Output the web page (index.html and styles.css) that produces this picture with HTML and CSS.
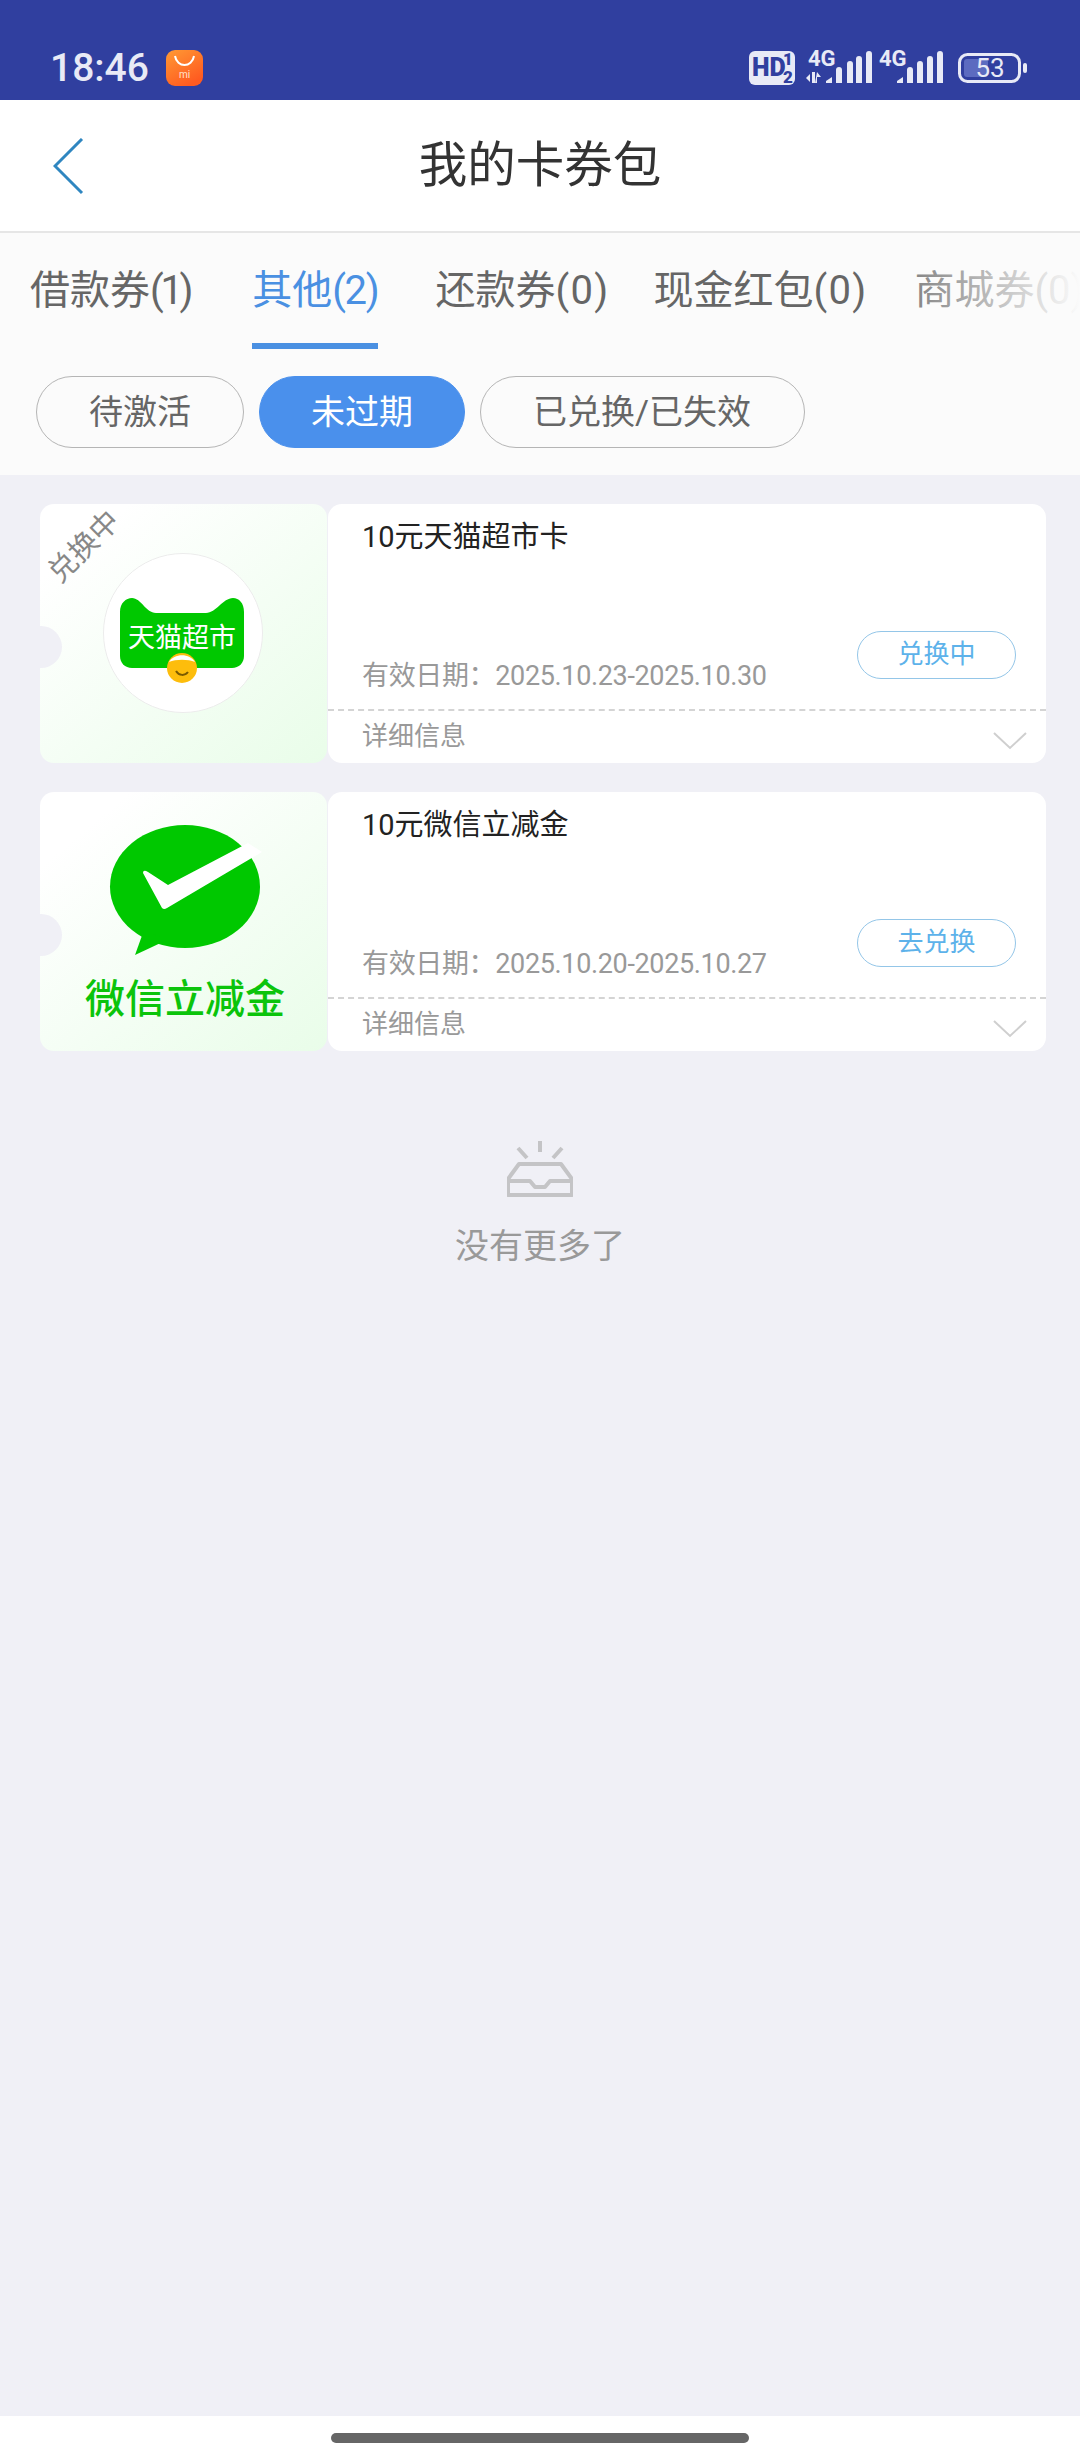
FILE: index.html
```html
<!DOCTYPE html>
<html lang="zh">
<head>
<meta charset="utf-8">
<title>我的卡券包</title>
<link rel="stylesheet" href="styles.css">
</head>
<body>
<div class="page">
  <div class="status">
    <div class="status-left">
      <span class="time">18:46</span>
      <svg class="mi-icon" width="37" height="36" viewBox="0 0 37 36">
        <defs><linearGradient id="mi" x1="0" y1="0" x2="0.6" y2="1"><stop offset="0" stop-color="#ff9a34"/><stop offset="1" stop-color="#ff5a20"/></linearGradient></defs>
        <rect width="37" height="36" rx="9" fill="url(#mi)"/>
        <path d="M9 6c2 12 17 12 19 0" fill="none" stroke="#fff" stroke-width="2"/>
        <text x="18.500" y="28" class="mi-text">mi</text>
      </svg>
    </div>
    <svg class="status-right" width="280" height="46" viewBox="751 40 280 46">
      <rect x="751" y="51" width="46" height="34" rx="6" fill="#e8eaf6"/>
      <text x="754" y="76" class="hd">HD</text>
      <text x="785" y="65" class="hd-small">1</text>
      <text x="785" y="83" class="hd-small">2</text>
      <text x="810" y="66" class="net">4G</text>
      <path d="M808 78l4-4v8zM814 72h3v11h-3zM819 72l4 5h-4v6h-2z" fill="#e8eaf6"/>
      <path d="M828 83v-2l6-4v6zM838 83v-13a1 1 0 0 1 6 0v13zM849 83v-19a1 1 0 0 1 6 0v19zM858 83v-24a1 1 0 0 1 6 0v24zM868 83v-29a1 1 0 0 1 6 0v29z" fill="#e8eaf6"/>
      <text x="881" y="66" class="net">4G</text>
      <path d="M899 83v-2l6-4v6zM909 83v-13a1 1 0 0 1 6 0v13zM919 83v-19a1 1 0 0 1 6 0v19zM929 83v-24a1 1 0 0 1 6 0v24zM939 83v-29a1 1 0 0 1 6 0v29z" fill="#e8eaf6"/>
      <rect x="961.500" y="54.500" width="60" height="27" rx="8" fill="none" stroke="#e8eaf6" stroke-width="3"/>
      <rect x="966" y="59" width="24" height="18" rx="3" fill="#5c6bc0"/>
      <text x="992" y="77" class="batt">53</text>
      <rect x="1025" y="63" width="4" height="10" rx="2" fill="#e8eaf6"/>
    </svg>
  </div>

  <header class="header">
    <svg class="back" width="31" height="57" viewBox="0 0 31 57"><path d="M29 1 2 28l27 27" fill="none" stroke="#2f86c0" stroke-width="3"/></svg>
    <h1 class="title">我的卡券包</h1>
  </header>

  <section class="filters">
    <div class="tabs">
      <span class="tab tab-a">借款券<span class="par-a">(1)</span></span>
      <span class="tab tab-b active">其他<span class="par-b">(2)</span></span>
      <span class="tab tab-c">还款券<span class="par-c">(0)</span></span>
      <span class="tab tab-d">现金红包<span class="par-c">(0)</span></span>
      <span class="tab">商城券(0)</span>
      <div class="tabs-fade"></div>
    </div>
    <div class="pills">
      <span class="pill">待激活</span>
      <span class="pill on">未过期</span>
      <span class="pill pill-wide">已兑换/已失效</span>
    </div>
  </section>

  <main class="list">
    <article class="card">
      <div class="thumb">
        <span class="notch"></span>
        <span class="stamp">兑换中</span>
        <svg class="art" width="287" height="259" viewBox="0 0 287 259">
          <circle cx="143" cy="129" r="79.500" fill="#fff" stroke="#ececec" stroke-width="1"/>
          <path d="M80 108c0-9 6-14 12-14 9 0 14 15 24 15h50c10 0 17-15 27-15 6 0 11 5 11 14v44c0 7-5 12-12 12H92c-7 0-12-5-12-12z" fill="#00c800"/>
          <text x="142" y="143" class="tm-text">天猫超市</text>
          <circle cx="142" cy="164" r="15" fill="#fdbd0c"/>
          <path d="M129 158c5-9 21-9 26 0-7-3-19-3-26 0z" fill="#fff"/>
          <path d="M136 167c3 5 9 5 12 1" fill="none" stroke="#7a5a00" stroke-width="2"/>
        </svg>
      </div>
      <div class="info">
        <div class="info-top">
          <div class="name">10元天猫超市卡</div>
          <div class="info-row">
            <span class="date">有效日期：2025.10.23-2025.10.30</span>
            <span class="btn">兑换中</span>
          </div>
        </div>
        <div class="more">
          <span>详细信息</span>
          <svg class="chev" width="34" height="18" viewBox="0 0 34 18"><path d="M1 1l16 15L33 1" fill="none" stroke="#cfcfcf" stroke-width="2"/></svg>
        </div>
      </div>
    </article>

    <article class="card">
      <div class="thumb">
        <span class="notch"></span>
        <svg class="art" width="287" height="259" viewBox="0 0 287 259">
          <ellipse cx="145" cy="94.500" rx="75" ry="61.500" fill="#00c800"/>
          <path d="M104 138l-9 25 32-15z" fill="#00c800"/>
          <path d="M103 81l19 35q2 2 5 0l95-56-14-9-80 42-20-13q-5-3-5 1z" fill="#fff"/>
        </svg>
        <span class="wx-label">微信立减金</span>
      </div>
      <div class="info">
        <div class="info-top">
          <div class="name">10元微信立减金</div>
          <div class="info-row">
            <span class="date">有效日期：2025.10.20-2025.10.27</span>
            <span class="btn">去兑换</span>
          </div>
        </div>
        <div class="more">
          <span>详细信息</span>
          <svg class="chev" width="34" height="18" viewBox="0 0 34 18"><path d="M1 1l16 15L33 1" fill="none" stroke="#cfcfcf" stroke-width="2"/></svg>
        </div>
      </div>
    </article>

    <div class="empty">
      <svg width="66" height="56" viewBox="0 0 66 56">
        <path d="M33 0v11M11 7l9 10M55 7l-9 10M12 23h42l11 15v16H1V38zM1 40h22l5 6h10l5-6h22" fill="none" stroke="#c4c4c6" stroke-width="4" stroke-linejoin="round"/>
      </svg>
      <p class="empty-text">没有更多了</p>
    </div>
  </main>

  <footer class="nav"><span class="home"></span></footer>
</div>
</body>
</html>
```

FILE: styles.css
```css
* { box-sizing: border-box; }
html, body { margin: 0; padding: 0; }
body { font-family: Roboto, "Noto Sans CJK SC", sans-serif; background: #f0f0f6; }
.page { width: 1080px; height: 2460px; display: flex; flex-direction: column; overflow: hidden; }

.status { height: 100px; background: #303f9f; display: flex; justify-content: space-between; align-items: flex-start; padding: 40px 51px 0 50px; color: #e8eaf6; }
.status-left { display: flex; align-items: center; gap: 17px; margin-top: 10px; }
.time { font-size: 39px; line-height: 36px; font-weight: 500; }
.mi-icon { display: block; }
.mi-text { font-size: 10px; fill: #ffe2d0; text-anchor: middle; }
.status-right { display: block; }
.status svg text { font-family: Roboto, sans-serif; }
.hd { font-size: 25px; font-weight: 900; fill: #303f9f; }
.hd-small { font-size: 17px; font-weight: 900; fill: #303f9f; }
.net { font-size: 22px; font-weight: 700; fill: #e8eaf6; }
.batt { font-size: 26px; fill: #e8eaf6; text-anchor: middle; }

.header { height: 133px; background: #fff; border-bottom: 2px solid #e6e6e6; display: flex; align-items: center; justify-content: center; position: relative; }
.back { position: absolute; left: 53px; top: 38px; }
.title { margin: 0; font-size: 48.500px; font-weight: 400; color: #333; line-height: 60px; }

.filters { background: #fbfbfb; }
.tabs { display: flex; padding-left: 30px; position: relative; overflow: hidden; white-space: nowrap; }
.tab { font-size: 40px; line-height: 40px; color: #666; padding: 38px 0 32px; border-bottom: 6px solid transparent; flex: none; }
.tab-a { margin-right: 62px; }
.tab-b { margin-right: 57px; }
.tab-c { margin-right: 44px; }
.tab-d { margin-right: 47px; }
.par-a { letter-spacing: -3.300px; }
.par-b { letter-spacing: -1.300px; }
.par-c { letter-spacing: 1.300px; }
.tab.active { color: #4a90e2; border-bottom-color: #4a90e2; }
.tabs-fade { position: absolute; top: 0; right: 0; bottom: 0; width: 190px; background: linear-gradient(to right, rgba(251,251,251,0.1), #fbfbfb 100%); }

.pills { display: flex; gap: 15px; padding: 27px 36px; }
.pill { height: 72px; line-height: 70px; padding: 0 52px; border: 1px solid #b5b5b5; border-radius: 36px; font-size: 34px; color: #666; }
.pill.on { background: #4a90ec; border-color: #4a90ec; color: #fff; padding: 0 51px; }
.pill-wide { padding: 0 53px 0 52px; }

.list { flex: 1; padding: 29px 34px 0 40px; display: flex; flex-direction: column; gap: 29px; }
.card { display: flex; gap: 1px; height: 259px; }
.thumb { width: 287px; flex: none; border-radius: 14px; background: linear-gradient(140deg, #fff 15%, #e9fde9 100%); position: relative; overflow: hidden; }
.notch { position: absolute; left: -20px; top: 122px; width: 42px; height: 42px; border-radius: 50%; background: #f0f0f6; }
.art { display: block; }
.art text { font-family: "Noto Sans CJK SC", sans-serif; }
.tm-text { font-size: 27px; fill: #fff; text-anchor: middle; }
.stamp { position: absolute; left: 0; top: 26px; width: 88px; font-size: 29px; line-height: 32px; color: #888; transform: rotate(-45deg); white-space: nowrap; z-index: 1; }
.wx-label { position: absolute; left: 0; right: 0; top: 185px; padding-left: 3px; text-align: center; font-size: 40px; line-height: 46px; color: #0bc40b; font-weight: 500; }

.info { flex: 1; background: #fff; border-radius: 14px; display: flex; flex-direction: column; }
.info-top { height: 207px; border-bottom: 2px dashed #d4d4d4; padding: 17px 30px 13px 34px; display: flex; flex-direction: column; justify-content: space-between; }
.name { font-size: 29px; line-height: 32px; color: #222; }
.info-row { display: flex; justify-content: space-between; align-items: flex-start; }
.date { font-size: 27px; letter-spacing: -0.350px; line-height: 40px; color: #999; margin-top: 25px; }
.btn { width: 159px; height: 48px; line-height: 44px; text-align: center; border: 1px solid #94c6e8; border-radius: 24px; font-size: 26px; color: #5db2ea; }
.more { flex: 1; display: flex; justify-content: space-between; align-items: center; padding: 0 19px 7px 34px; font-size: 26px; color: #999; }
.chev { margin-top: 15px; }

.empty { margin: 61px -34px 0 -40px; display: flex; flex-direction: column; align-items: center; }
.empty svg { display: block; }
.empty-text { margin: 29px 0 0; font-size: 34px; line-height: 40px; color: #999; }

.nav { height: 44px; background: #fff; display: flex; justify-content: center; padding-top: 17px; flex: none; }
.home { width: 418px; height: 10px; border-radius: 5px; background: #666; }
```
